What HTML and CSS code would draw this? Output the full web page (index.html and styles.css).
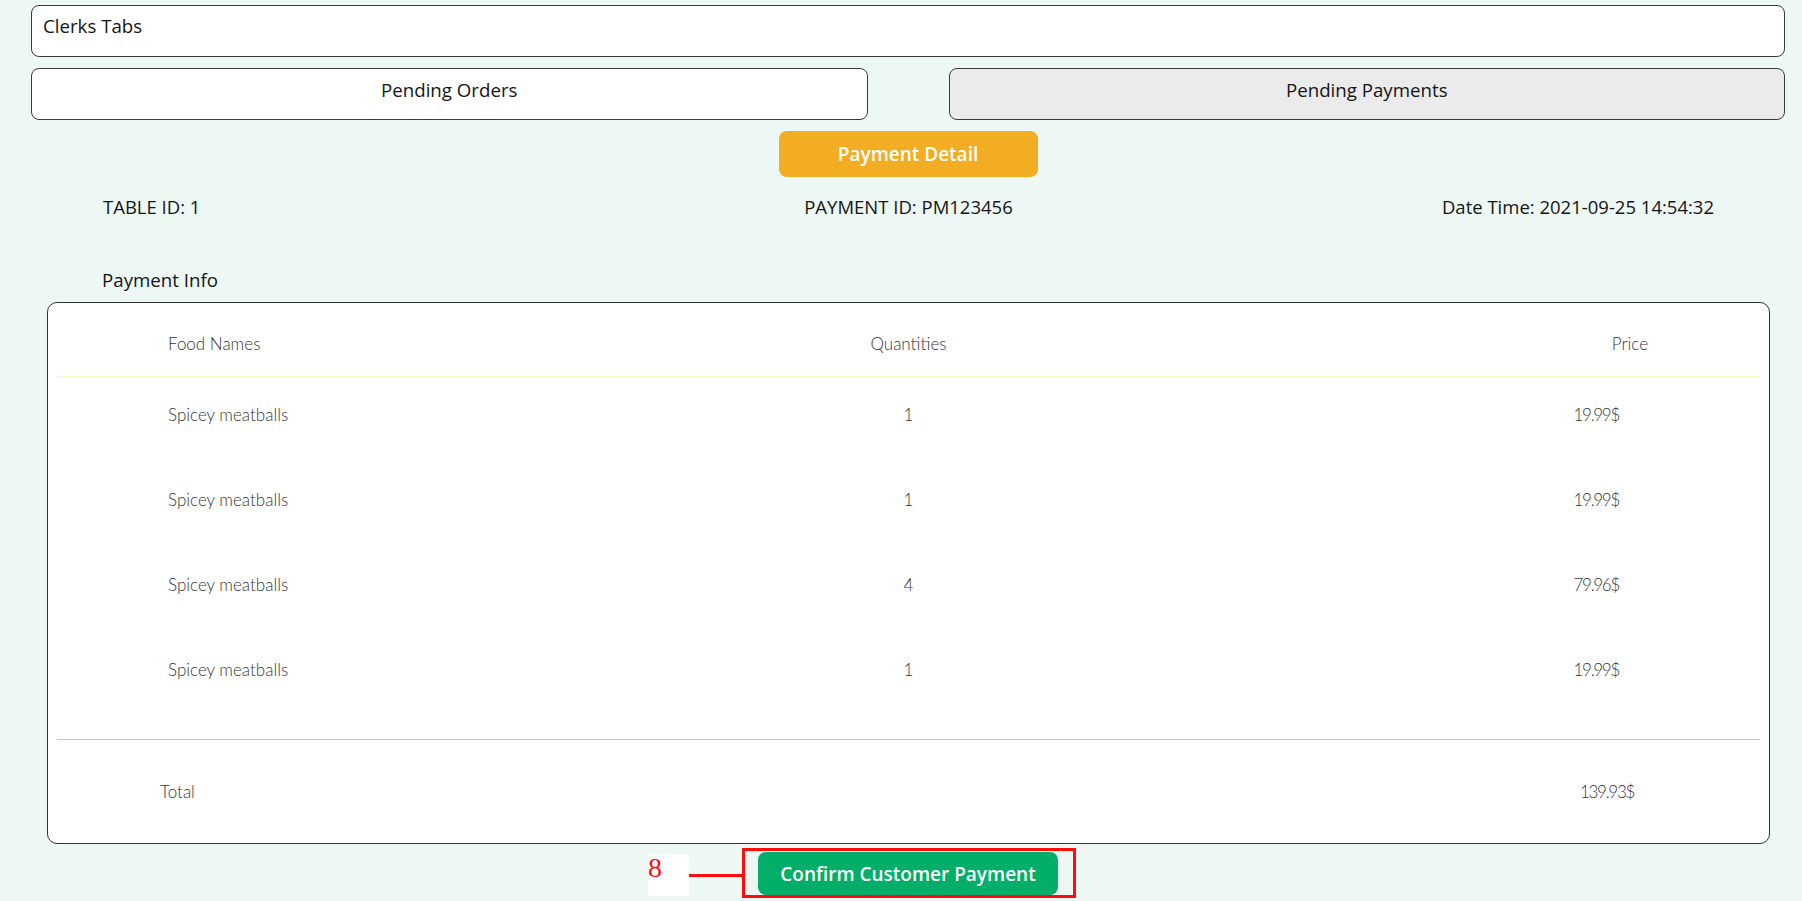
FILE: index.html
```html
<!DOCTYPE html>
<html lang="en">
<head>
<meta charset="utf-8">
<title>Clerks Tabs</title>
<link rel="stylesheet" href="styles.css">
</head>
<body>
<div class="page">
  <div class="title-box">Clerks Tabs</div>
  <div class="tabs">
    <div class="tab">Pending Orders</div>
    <div class="tab tab-active">Pending Payments</div>
  </div>
  <div class="center-row">
    <div class="btn btn-orange">Payment Detail</div>
  </div>
  <div class="meta">
    <span class="meta-left">TABLE ID: 1</span>
    <span class="meta-mid">PAYMENT ID: PM123456</span>
    <span class="meta-right">Date Time: 2021-09-25 14:54:32</span>
  </div>
  <div class="section-label">Payment Info</div>
  <div class="card">
    <div class="grid head">
      <div class="c1">Food Names</div>
      <div class="c2">Quantities</div>
      <div class="c3">Price</div>
    </div>
    <div class="rows">
      <div class="grid row"><div class="c1">Spicey meatballs</div><div class="c2">1</div><div class="c3 num">19.99$</div></div>
      <div class="grid row"><div class="c1">Spicey meatballs</div><div class="c2">1</div><div class="c3 num">19.99$</div></div>
      <div class="grid row"><div class="c1">Spicey meatballs</div><div class="c2">4</div><div class="c3 num">79.96$</div></div>
      <div class="grid row"><div class="c1">Spicey meatballs</div><div class="c2">1</div><div class="c3 num">19.99$</div></div>
    </div>
    <div class="grid total">
      <div class="c1">Total</div>
      <div class="c2"></div>
      <div class="c3 num">139.93$</div>
    </div>
  </div>
  <div class="center-row confirm-row">
    <div class="confirm-wrap">
      <div class="btn btn-green">Confirm Customer Payment</div>
      <div class="anno-box"></div>
      <div class="anno-line"></div>
      <div class="anno-label">8</div>
    </div>
  </div>
</div>
</body>
</html>
```

FILE: styles.css
```css
html, body {
  margin: 0;
  padding: 0;
}
body {
  background: #edf7f3;
  font-family: "Open Sans", "Noto Sans", sans-serif;
  color: #151515;
  overflow: hidden;
  height: 901px;
}
.page {
  padding: 5px 17px 0 31px;
}
.title-box {
  box-sizing: border-box;
  height: 52px;
  background: #fff;
  border: 1px solid #3a3a3a;
  border-radius: 8px;
  padding: 9px 10px 0 11px;
  font-size: 18.7px;
  line-height: 22px;
  font-weight: 400;
}
.tabs {
  margin-top: 11px;
  display: grid;
  grid-template-columns: 1fr 1fr;
  column-gap: 81px;
}
.tab {
  box-sizing: border-box;
  height: 52px;
  background: #fff;
  border: 1px solid #3a3a3a;
  border-radius: 8px;
  padding-top: 10px;
  text-align: center;
  font-size: 18.7px;
  line-height: 22px;
  font-weight: 400;
}
.tab-active {
  background: #ebebeb;
}
.center-row {
  display: flex;
  justify-content: center;
}
.btn {
  display: flex;
  align-items: center;
  justify-content: center;
  color: #fff;
  font-weight: 600;
  font-size: 19px;
  border-radius: 8px;
}
.btn-orange {
  margin-top: 11px;
  width: 259px;
  height: 46px;
  background: #f2ad22;
}
.meta {
  margin-top: 19px;
  padding: 0 71px 0 72px;
  display: grid;
  grid-template-columns: 1fr auto 1fr;
  font-size: 18.5px;
  line-height: 22px;
  font-weight: 400;
}
.meta-left { justify-self: start; }
.meta-mid { justify-self: center; }
.meta-right { justify-self: end; }
.section-label {
  margin-top: 51px;
  padding-left: 71px;
  font-size: 18.7px;
  line-height: 22px;
  font-weight: 400;
}
.card {
  margin: 11px 15px 0 16px;
  box-sizing: border-box;
  height: 542px;
  background: #fff;
  border: 1px solid #333;
  border-radius: 10px;
  padding: 0 9px;
  color: #363636;
  font-family: "Lato", "Open Sans", sans-serif;
  font-weight: 300;
  font-size: 17px;
  line-height: 20px;
}
.grid {
  display: grid;
  grid-template-columns: 1fr 1fr 1fr;
}
.c2 {
  text-align: center;
}
.c3 {
  text-align: right;
}
.num {
  letter-spacing: -1.3px;
}
.head {
  box-sizing: border-box;
  height: 74px;
  padding-top: 31px;
  border-bottom: 1px solid #f3f6c8;
}
.head .c1 { padding-left: 111px; }
.head .c3 { padding-right: 112px; }
.rows {
  padding-bottom: 22px;
  border-bottom: 1px solid #c4c4c4;
}
.row {
  box-sizing: border-box;
  height: 85px;
  padding-top: 28px;
}
.row .c1 { padding-left: 111px; }
.row .c2 { padding-left: 0; }
.row .c3 { padding-right: 141px; }
.total {
  box-sizing: border-box;
  height: 103px;
  padding-top: 42px;
}
.total .c1 { padding-left: 103px; }
.total .c3 { padding-right: 126px; }
.confirm-row {
  margin-top: 8px;
}
.confirm-wrap {
  position: relative;
}
.btn-green {
  width: 300px;
  height: 43px;
  background: #02ae68;
}
.anno-box {
  position: absolute;
  left: -16px;
  top: -4px;
  width: 334px;
  height: 50px;
  box-sizing: border-box;
  border: 3px solid #ff0d0d;
}
.anno-line {
  position: absolute;
  left: -69px;
  top: 22px;
  width: 53px;
  height: 3px;
  background: #ff0d0d;
}
.anno-label {
  position: absolute;
  left: -110px;
  top: 2px;
  width: 41px;
  height: 42px;
  background: #fff;
  color: #ff0d0d;
  font-family: "Liberation Serif", "Times New Roman", serif;
  font-size: 28px;
  line-height: 28px;
  padding-left: 0;
  box-sizing: border-box;
}
```
